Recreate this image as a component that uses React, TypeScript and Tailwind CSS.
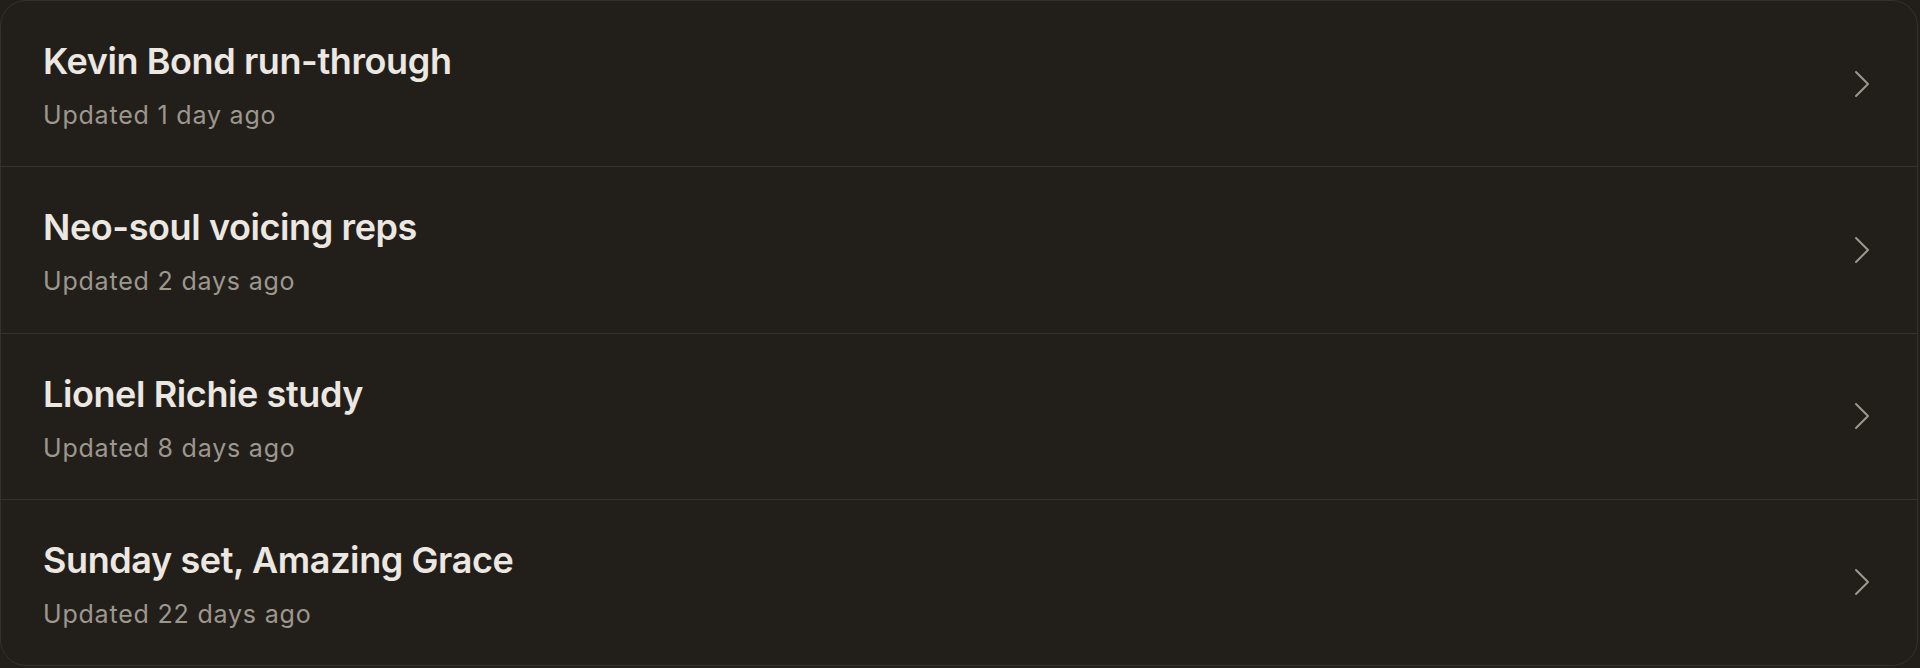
import React from 'react';

const items = [
  { title: 'Kevin Bond run-through', updated: 'Updated 1 day ago' },
  { title: 'Neo-soul voicing reps', updated: 'Updated 2 days ago' },
  { title: 'Lionel Richie study', updated: 'Updated 8 days ago' },
  { title: 'Sunday set, Amazing Grace', updated: 'Updated 22 days ago' },
];

const Chevron: React.FC = () => (
  <svg width="16" height="28" viewBox="0 0 16 28" fill="none" className="shrink-0">
    <polyline points="2,2 14,14 2,26" stroke="#9d978d" strokeWidth="2" strokeLinecap="round" strokeLinejoin="round" />
  </svg>
);

const App: React.FC = () => {
  return (
    <div className="w-[1920px] h-[668px] bg-[#221f1b]" style={{ fontFamily: 'Inter, "Noto Sans", sans-serif' }}>
      <div className="w-[1918px] h-[666px] rounded-[26px] border border-[#35322d] bg-[#221f1b] overflow-hidden flex flex-col">
        {items.map((item, i) => (
          <div
            key={item.title}
            className={`flex-1 flex items-center justify-between pl-[42px] pr-[47px] ${
              i < items.length - 1 ? 'border-b border-[#35322d]' : ''
            }`}
          >
            <div className="flex flex-col gap-[16px] pt-[3px]">
              <div className="text-[36px] leading-[44px] font-semibold text-[#ece8e1] tracking-[-0.4px]">{item.title}</div>
              <div className="text-[25px] leading-[32px] text-[#9d978d] tracking-[0.8px]">{item.updated}</div>
            </div>
            <Chevron />
          </div>
        ))}
      </div>
    </div>
  );
};

export default App;
